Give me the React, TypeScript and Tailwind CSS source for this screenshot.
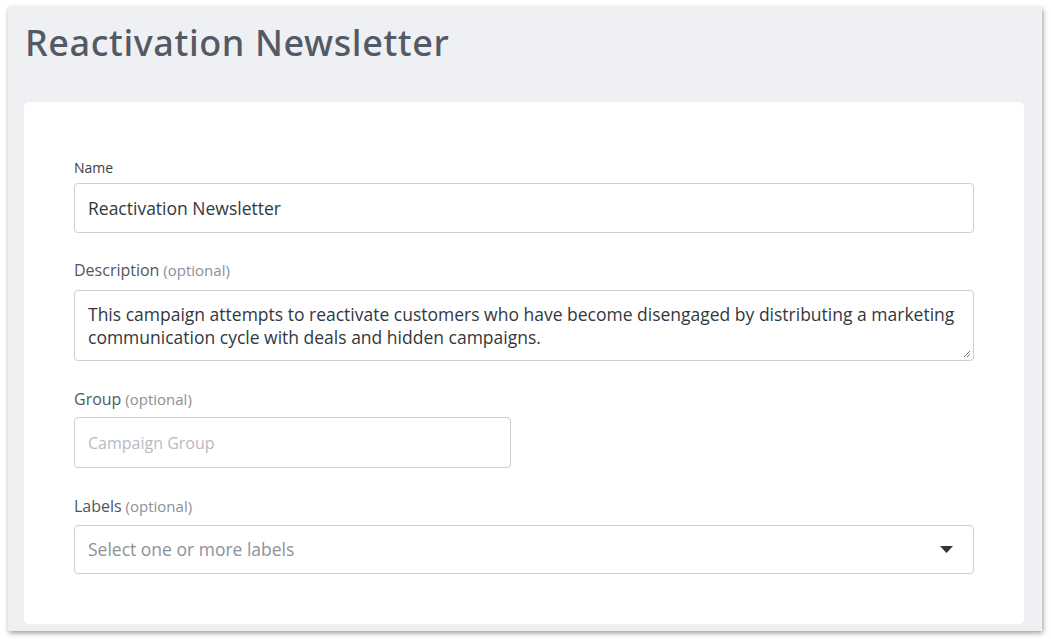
const bodyFont = { fontFamily: "'Open Sans', 'Noto Sans', sans-serif" };

function Label({ text, optional, small }: { text: string; optional?: boolean; small?: boolean }) {
  return (
    <label
      className={
        small
          ? "block text-[14px] leading-[20px] text-[#3a4049]"
          : "block text-[16px] leading-[22px] text-[#505761]"
      }
    >
      {text}
      {optional && <span className="text-[15px] text-[#8b9096]"> (optional)</span>}
    </label>
  );
}

export default function App() {
  return (
    <div className="w-[1051px] h-[639px] bg-white pt-[7px] pl-[8px]" style={bodyFont}>
      <div className="w-[1034px] h-[624px] bg-[#eff0f4] shadow-[1px_2px_5px_rgba(0,0,0,0.4)] px-[16px] pt-[12px] overflow-hidden">
        <h1
          className="text-[36px] leading-[48px] font-medium text-[#535a66] pl-[1px] tracking-[0.6px]"
          style={{ fontFamily: "'Noto Sans', 'Open Sans', sans-serif" }}
        >
          Reactivation Newsletter
        </h1>
        <div className="mt-[35px] w-[1000px] bg-white rounded-[5px] h-[522px] px-[50px] pt-[56px]">
          <Label text="Name" small />
          <div className="mt-[5px] h-[50px] border border-[#cfcfcf] rounded-[4px] flex items-center px-[13px] text-[17.5px] text-[#333840]">
            Reactivation Newsletter
          </div>

          <div className="mt-[26px]">
            <Label text="Description" optional />
          </div>
          <div className="relative mt-[9px] h-[71px] border border-[#cfcfcf] rounded-[4px] px-[13px] pt-[12px] text-[17.5px] leading-[23px] text-[#333840]">
            This campaign attempts to reactivate customers who have become disengaged by distributing a marketing
            communication cycle with deals and hidden campaigns.
            <svg className="absolute right-[2px] bottom-[2px]" width="9" height="9" viewBox="0 0 9 9">
              <path d="M8 2 L2 8 M8 5 L5 8" stroke="#777" strokeWidth="1" />
            </svg>
          </div>

          <div className="mt-[27px]">
            <Label text="Group" optional />
          </div>
          <div className="mt-[7px] w-[437px] h-[51px] border border-[#cfcfcf] rounded-[4px] flex items-center px-[13px] text-[16px] text-[#b8bbbf]">
            Campaign Group
          </div>

          <div className="mt-[27px]">
            <Label text="Labels" optional />
          </div>
          <div className="mt-[8px] h-[49px] border border-[#cfcfcf] rounded-[4px] flex items-center justify-between pl-[13px] pr-[20px] text-[17.5px] text-[#8e9297]">
            <span>Select one or more labels</span>
            <svg width="13" height="7" viewBox="0 0 13 7">
              <path d="M0 0 H13 L6.5 7 Z" fill="#333" />
            </svg>
          </div>
        </div>
      </div>
    </div>
  );
}
